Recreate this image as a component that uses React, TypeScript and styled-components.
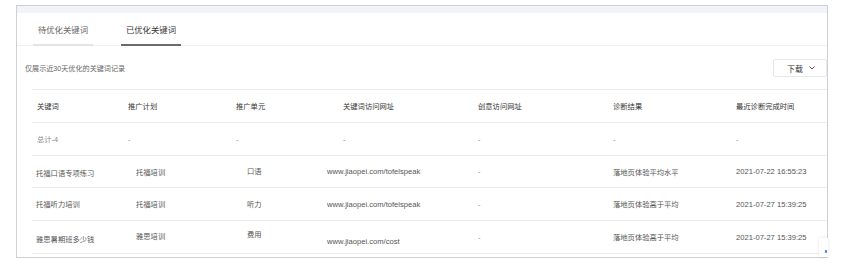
import React from "react";
import styled, { createGlobalStyle } from "styled-components";

const Global = createGlobalStyle`
  html, body { margin: 0; padding: 0; background: #ffffff; }
  body {
    font-family: "Liberation Sans", "Noto Sans CJK SC", sans-serif;
    -webkit-font-smoothing: antialiased;
  }
`;

const Page = styled.div`
  position: relative;
  width: 850px;
  height: 271px;
  padding: 5px 0 0 16px;
  box-sizing: border-box;
  background: #fff;
  overflow: hidden;
`;

const Frame = styled.div`
  width: 812px;
  height: 253px;
  box-sizing: border-box;
  border: 1px solid #cdd0d5;
  background: #fff;
  display: flex;
  flex-direction: column;
  overflow: hidden;
`;

const TopBand = styled.div`
  height: 7px;
  background: #f1f3f8;
  flex: none;
`;

const TabBar = styled.div`
  height: 32px;
  flex: none;
  display: flex;
  gap: 28px;
  padding-left: 16px;
  border-bottom: 1px solid #eeeff1;
`;

const Tab = styled.div<{ $active?: boolean }>`
  width: 60px;
  display: flex;
  align-items: center;
  justify-content: center;
  font-size: 8.4px;
  color: ${(p) => (p.$active ? "#333" : "#666")};
  padding-top: 1px;
  box-sizing: border-box;
  border-bottom: 2px solid ${(p) => (p.$active ? "#6b6b6b" : "#e4e4e4")};
  margin-bottom: -1px;
`;

const Content = styled.div`
  padding-left: 8px;
  display: flex;
  flex-direction: column;
`;

const Toolbar = styled.div`
  height: 18px;
  margin: 13px 0 12px;
  display: flex;
  align-items: center;
  justify-content: space-between;
`;

const Note = styled.div`
  font-size: 7.1px;
  color: #666;
  margin-top: -1px;
`;

const DownloadButton = styled.div`
  width: 54px;
  height: 18px;
  box-sizing: border-box;
  border: 1px solid #e6e7ea;
  border-radius: 2px;
  display: flex;
  align-items: center;
  justify-content: center;
  gap: 6px;
  padding-left: 2px;
  font-size: 8px;
  color: #333;
  background: #fff;
`;

const Table = styled.div`
  margin-left: 7px;
  display: flex;
  flex-direction: column;
  border-top: 1px solid #ebebeb;
`;

const Row = styled.div<{ $h: number }>`
  display: grid;
  grid-template-columns: 91px 108px 91px 151px 135px 123px 95px;
  height: ${(p) => p.$h}px;
  border-bottom: 1px solid #ebebeb;
`;

const Cell = styled.div<{
  $pad: number;
  $tone: "head" | "body" | "muted";
  $latin?: boolean;
}>`
  display: flex;
  align-items: center;
  padding-left: ${(p) => p.$pad}px;
  font-size: ${(p) => (p.$latin ? 7.6 : 7.3)}px;
  white-space: nowrap;
  color: ${(p) =>
    p.$tone === "head" ? "#333" : p.$tone === "muted" ? "#8a8a8a" : "#555"};
`;

const CellText = styled.span<{ $dy: number }>`
  margin-top: ${(p) => p.$dy * 2}px;
`;

const Floater = styled.div`
  position: absolute;
  left: 819px;
  top: 238px;
  width: 9px;
  height: 19px;
  background: #fff;
  box-shadow: 0 0 3px rgba(0, 0, 0, 0.12);
  display: flex;
  align-items: flex-end;
  justify-content: flex-end;
  padding: 0 1px 4px 0;
  box-sizing: border-box;
`;

const BlueDot = styled.div`
  width: 2px;
  height: 3px;
  border-radius: 1px;
  background: #2f7cf6;
`;

const headPad = [5, 5, 5, 21, 5, 5, 5];
const bodyPad = [4, 13, 16, 5, 5, 5, 5];

const headers = [
  "关键词",
  "推广计划",
  "推广单元",
  "关键词访问网址",
  "创意访问网址",
  "诊断结果",
  "最近诊断完成时间",
];

type RowData = { h: number; cells: string[]; dy?: number[]; muted?: boolean };

const rows: RowData[] = [
  { h: 32, cells: ["总计-4", "-", "-", "-", "-", "-", "-"], muted: true },
  {
    h: 31,
    cells: [
      "托福口语专项练习",
      "托福培训",
      "口语",
      "www.jiaopei.com/tofelspeak",
      "-",
      "落地页体验平均水平",
      "2021-07-22 16:55:23",
    ],
    dy: [1, 0, -1, 0, 0, 0, 0],
  },
  {
    h: 32,
    cells: [
      "托福听力培训",
      "托福培训",
      "听力",
      "www.jiaopei.com/tofelspeak",
      "-",
      "落地页体验高于平均",
      "2021-07-27 15:39:25",
    ],
  },
  {
    h: 32,
    cells: [
      "雅思暑期班多少钱",
      "雅思培训",
      "费用",
      "www.jiaopei.com/cost",
      "-",
      "落地页体验高于平均",
      "2021-07-27 15:39:25",
    ],
    dy: [2, -1, -3, 4, 0, 0, 0],
  },
];

const isLatin = (s: string) => /^[\x00-\x7f]+$/.test(s);

const Chevron = () => (
  <svg width="6" height="4" viewBox="0 0 6 4" fill="none">
    <polyline
      points="0.8,0.8 3,3 5.2,0.8"
      stroke="#555"
      strokeWidth="1"
      strokeLinecap="round"
      strokeLinejoin="round"
    />
  </svg>
);

export default function App() {
  return (
    <>
      <Global />
      <Page>
        <Frame>
          <TopBand />
          <TabBar>
            <Tab>待优化关键词</Tab>
            <Tab $active>已优化关键词</Tab>
          </TabBar>
          <Content>
            <Toolbar>
              <Note>仅展示近30天优化的关键词记录</Note>
              <DownloadButton>
                <span>下载</span>
                <Chevron />
              </DownloadButton>
            </Toolbar>
            <Table>
              <Row $h={32}>
                {headers.map((h, i) => (
                  <Cell key={h} $pad={headPad[i]} $tone="head">
                    <CellText $dy={0}>{h}</CellText>
                  </Cell>
                ))}
              </Row>
              {rows.map((r, ri) => (
                <Row key={ri} $h={r.h}>
                  {r.cells.map((c, ci) => (
                    <Cell
                      key={ci}
                      $pad={r.muted ? headPad[ci] : bodyPad[ci]}
                      $tone={r.muted || c === "-" ? "muted" : "body"}
                      $latin={isLatin(c)}
                    >
                      <CellText $dy={r.dy ? r.dy[ci] : 0}>{c}</CellText>
                    </Cell>
                  ))}
                </Row>
              ))}
            </Table>
          </Content>
        </Frame>
        <Floater>
          <BlueDot />
        </Floater>
      </Page>
    </>
  );
}
